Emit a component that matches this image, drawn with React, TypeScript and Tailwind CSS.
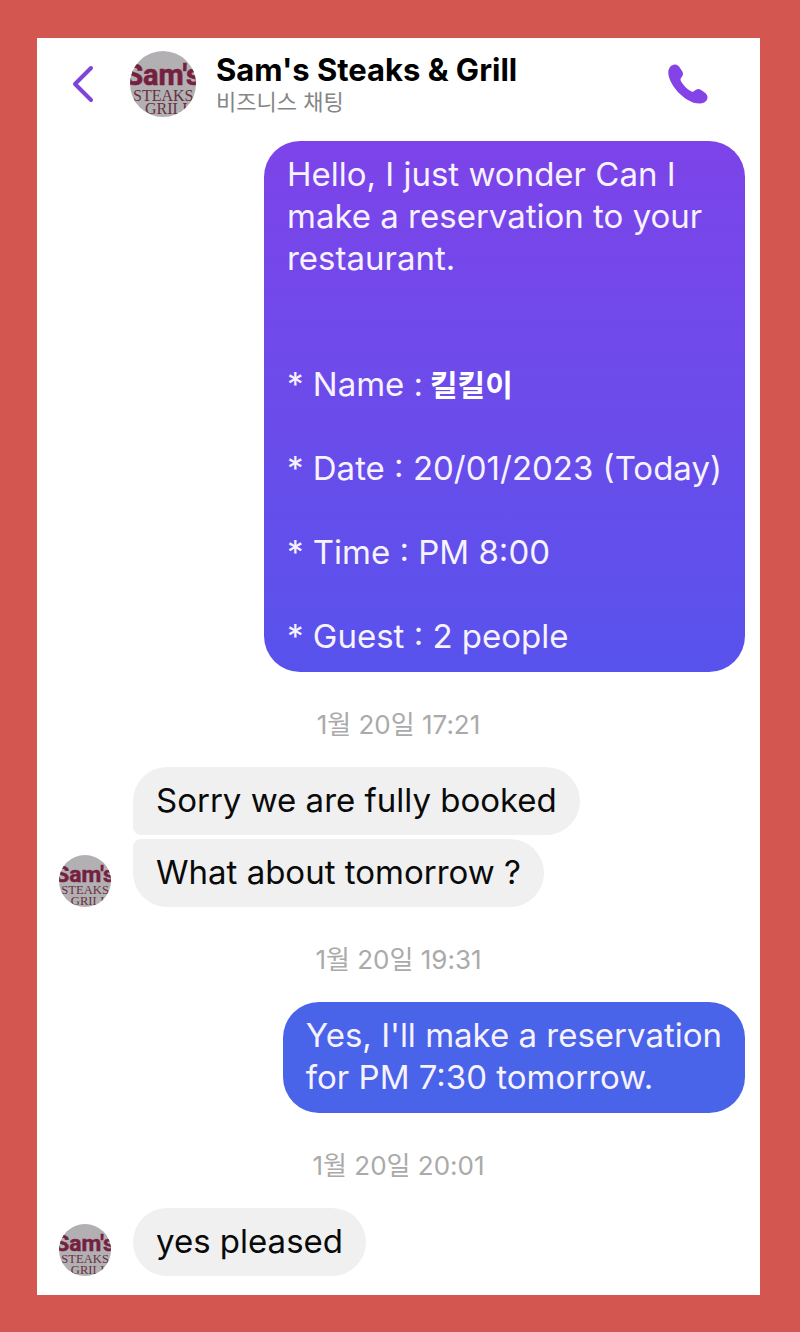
import { useId, type ReactNode } from 'react';

function Logo({ className }: { className: string }) {
  const clip = useId();
  return (
    <svg viewBox="0 0 66 66" className={className} role="img" aria-label="Sam's Steaks & Grill">
      <defs>
        <clipPath id={clip}>
          <circle cx="33" cy="33" r="33" />
        </clipPath>
      </defs>
      <g clipPath={`url(#${clip})`}>
        <rect width="66" height="66" fill="#b2b0b2" />
        <text
          x="33"
          y="34"
          fontSize="29"
          textAnchor="middle"
          fill="#74213f"
          stroke="#74213f"
          strokeWidth="0.6"
          className="font-['Roboto',sans-serif] font-bold"
        >
          Sam's
        </text>
        <g fill="#66303f" className="font-['Liberation_Serif',serif]">
          <text x="3" y="50" fontSize="16">STEAKS</text>
          <text x="15" y="63" fontSize="16">GRILL</text>
        </g>
      </g>
    </svg>
  );
}

function Stamp({ children }: { children: ReactNode }) {
  return <time className="block pt-[37px] pb-[26px] text-center text-[26px] leading-8 text-[#aaaaaa]">{children}</time>;
}

function Sent({ className, lines }: { className: string; lines: ReactNode[] }) {
  return (
    <div className="flex justify-end pr-[15px]">
      <div className={`rounded-[36px] px-[23px] pt-3 pb-[15px] text-[33px] leading-[42px] text-[#f6f2ff] ${className}`}>
        {lines.map((line, i) => (
          <p key={i} className="min-h-[42px]">
            {line}
          </p>
        ))}
      </div>
    </div>
  );
}

function Received({ messages }: { messages: string[] }) {
  return (
    <div className="flex items-end gap-[22px] pl-[22px]">
      <Logo className="size-[52px] shrink-0" />
      <div className="flex flex-col items-start gap-1">
        {messages.map((text, i) => (
          <p
            key={text}
            className={`rounded-[34px] bg-[#f0f0f0] px-[23px] pt-3 pb-[14px] text-[33px] leading-[42px] text-[#0a0a0a] ${
              i < messages.length - 1 ? 'rounded-bl-lg' : ''
            } ${i > 0 ? 'rounded-tl-lg' : ''}`}
          >
            {text}
          </p>
        ))}
      </div>
    </div>
  );
}

const request: ReactNode[] = [
  'Hello, I just wonder Can I',
  'make a reservation to your',
  'restaurant.',
  '',
  '',
  <>
    * Name :
    <span className="font-['Noto_Sans_CJK_KR',sans-serif] text-[30px] leading-none font-bold text-white"> 킬킬이</span>
  </>,
  '',
  '* Date : 20/01/2023 (Today)',
  '',
  '* Time : PM 8:00',
  '',
  '* Guest : 2 people',
];

export default function App() {
  return (
    <div className="min-h-screen bg-[#d35650] pt-[38px] pr-10 pb-[37px] pl-[37px] font-['Inter','Noto_Sans_CJK_KR',sans-serif]">
      <main className="bg-white pb-[19px]">
        <header className="flex h-[103px] items-center pr-[52px] pb-[11px] pl-[35px]">
          <button type="button" aria-label="Back" className="mr-9 text-[#7f43d6]">
            <svg viewBox="0 0 22 38" className="h-[38px] w-[22px]" fill="none" stroke="currentColor" strokeWidth="4" strokeLinecap="round" strokeLinejoin="round">
              <path d="M19 3 3 19l16 16" />
            </svg>
          </button>
          <Logo className="mr-5 size-[66px] shrink-0" />
          <div className="grow">
            <h1 className="text-[31px] leading-9 font-bold text-black">Sam's Steaks &amp; Grill</h1>
            <p className="text-[22px] leading-7 text-[#858585]">비즈니스 채팅</p>
          </div>
          <button type="button" aria-label="Call" className="text-[#8443e6]">
            <svg viewBox="0 0 40 40" className="size-10" fill="currentColor">
              <path d="M6.8.5C9 .4 10.600 1.700 12.200 4.200L14.200 7.300C15.500 9.600 15.200 11.200 13.600 13.200C12.300 14.800 12.200 15.800 13.100 17.400C15.500 21.400 18.800 24.700 22.600 27C24.200 28 25.300 27.900 26.800 26.500C28.700 24.800 30.500 24.500 32.700 25.800L36.300 28.300C38.700 30 39.700 31.800 39.500 33.800C39.100 37.100 36.300 39.200 32.300 39.500C26.300 39.900 18.700 36.600 12.300 30.300C5 23.200.2 14.700.3 8.200C.4 3.800 3.200.7 6.800.5Z" />
            </svg>
          </button>
        </header>

        <Sent className="bg-linear-to-b from-[#7c43e9] to-[#5852ec]" lines={request} />
        <Stamp>1월 20일 17:21</Stamp>
        <Received messages={['Sorry we are fully booked', 'What about tomorrow ?']} />
        <Stamp>1월 20일 19:31</Stamp>
        <Sent className="bg-[#4963e9]" lines={["Yes, I'll make a reservation", 'for PM 7:30 tomorrow.']} />
        <Stamp>1월 20일 20:01</Stamp>
        <Received messages={['yes pleased']} />
      </main>
    </div>
  );
}
